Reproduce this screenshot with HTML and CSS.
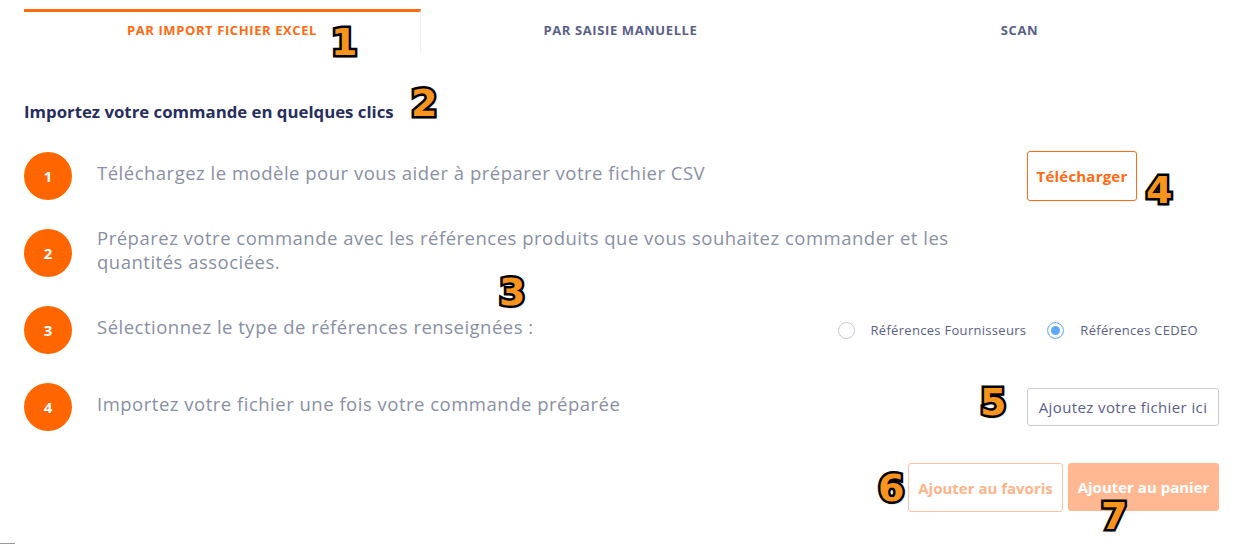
FILE: index.html
```html
<!DOCTYPE html>
<html lang="fr">
<head>
<meta charset="utf-8">
<title>Import commande</title>
<link rel="stylesheet" href="styles.css">
</head>
<body>
<div class="page">
  <nav class="tabs">
    <div class="tab active">PAR IMPORT FICHIER EXCEL</div>
    <div class="tab">PAR SAISIE MANUELLE</div>
    <div class="tab">SCAN</div>
  </nav>

  <h1 class="title">Importez votre commande en quelques clics</h1>

  <ol class="steps">
    <li class="step">
      <span class="num">1</span>
      <p class="text">Téléchargez le modèle pour vous aider à préparer votre fichier CSV</p>
      <button class="btn btn-outline-orange">Télécharger</button>
    </li>
    <li class="step">
      <span class="num">2</span>
      <p class="text wide">Préparez votre commande avec les références produits que vous souhaitez commander et les quantités associées.</p>
    </li>
    <li class="step">
      <span class="num">3</span>
      <p class="text">Sélectionnez le type de références renseignées :</p>
      <div class="radios">
        <label class="radio"><span class="dot"></span>Références Fournisseurs</label>
        <label class="radio"><span class="dot checked"></span>Références CEDEO</label>
      </div>
    </li>
    <li class="step">
      <span class="num">4</span>
      <p class="text">Importez votre fichier une fois votre commande préparée</p>
      <button class="btn btn-file">Ajoutez votre fichier ici</button>
    </li>
  </ol>

  <div class="actions">
    <button class="btn btn-fav">Ajouter au favoris</button>
    <button class="btn btn-cart">Ajouter au panier</button>
  </div>
</div>
<div class="corner-line"></div>

<span class="mark m1">1</span>
<span class="mark m2">2</span>
<span class="mark m3">3</span>
<span class="mark m4">4</span>
<span class="mark m5">5</span>
<span class="mark m6">6</span>
<span class="mark m7">7</span>
</body>
</html>
```

FILE: styles.css
```css
* { box-sizing: border-box; }
html, body { margin: 0; padding: 0; background: #fff; }
body {
  font-family: "Open Sans", "Noto Sans", sans-serif;
  position: relative;
  width: 1237px;
  height: 552px;
  overflow: hidden;
}
.page {
  padding: 9px 18px 0 24px;
}
.tabs {
  display: grid;
  grid-template-columns: 397px 399px 1fr;
}
.tab {
  height: 43px;
  padding-top: 9px;
  text-align: center;
  font-size: 13px;
  line-height: 18px;
  letter-spacing: 0.6px;
  font-weight: 700;
  color: #5b6089;
  border-top: 3px solid transparent;
}
.tab.active {
  color: #ff6a13;
  border-top-color: #ff6a13;
  border-right: 1px solid #ececec;
}
.title {
  margin: 50px 0 0;
  font-size: 16.8px;
  line-height: 20px;
  font-weight: 700;
  color: #272e5e;
}
.steps {
  list-style: none;
  margin: 29px 0 0;
  padding: 0;
  display: flex;
  flex-direction: column;
  gap: 27px;
}
.step {
  display: flex;
  align-items: center;
  min-height: 50px;
}
.num {
  flex: 0 0 48px;
  width: 48px;
  height: 48px;
  border-radius: 50%;
  background: #ff6600;
  color: #fff;
  font-weight: 700;
  font-size: 15px;
  display: flex;
  align-items: center;
  justify-content: center;
}
.text {
  margin: -3px 0 3px 25px;
  font-size: 18.5px;
  line-height: 24px;
  letter-spacing: 0.5px;
  color: #8a8fa4;
}
.text.wide { max-width: 862px; }
.btn {
  font-family: inherit;
  font-size: 15px;
  font-weight: 700;
  background: #fff;
  border-radius: 3px;
  cursor: pointer;
  padding: 0;
}
.btn-outline-orange {
  margin-left: auto;
  margin-right: 82px;
  width: 110px;
  height: 50px;
  border: 1px solid #ff6a13;
  color: #ff6a13;
  letter-spacing: 0.2px;
}
.radios {
  margin-left: auto;
  margin-right: 21px;
  display: flex;
  gap: 21px;
  align-items: center;
}
.radio {
  display: flex;
  align-items: center;
  font-size: 13px;
  letter-spacing: 0.3px;
  color: #5b6089;
}
.dot {
  width: 17px;
  height: 17px;
  border-radius: 50%;
  border: 1px solid #c4c7d6;
  margin-right: 16px;
  background: #fff;
}
.dot.checked {
  border-color: #7eb6f7;
  box-shadow: inset 0 0 0 3px #fff;
  background: #5fa7f7;
}
.btn-file {
  margin-left: auto;
  width: 192px;
  height: 38px;
  border: 1px solid #c8cbdc;
  color: #5b6089;
  font-weight: 500;
  font-size: 15px;
  letter-spacing: 0.4px;
}
.actions {
  margin-top: 31px;
  display: flex;
  justify-content: flex-end;
  gap: 5px;
}
.btn-fav {
  width: 155px;
  height: 49px;
  border: 1px solid #ffc2a3;
  color: #ffb38a;
}
.btn-cart {
  width: 151px;
  height: 48px;
  border: none;
  background: #ffb891;
  color: #fff;
}
.corner-line {
  position: absolute;
  left: 0;
  top: 543px;
  width: 15px;
  height: 1px;
  background: #9a9a9a;
}
.mark {
  position: absolute;
  font-family: "DejaVu Sans", sans-serif;
  font-weight: 700;
  font-size: 38px;
  line-height: 30px;
  color: #f7941d;
  -webkit-text-stroke: 5px #000;
  paint-order: stroke fill;
  text-shadow: 1px 2px 2px rgba(0,0,0,0.5);
}
.m1 { left: 331px; top: 27px; }
.m2 { left: 411px; top: 88px; }
.m3 { left: 499px; top: 277px; }
.m4 { left: 1146px; top: 175px; }
.m5 { left: 980px; top: 387px; }
.m6 { left: 878px; top: 473px; }
.m7 { left: 1101px; top: 501px; }
```
